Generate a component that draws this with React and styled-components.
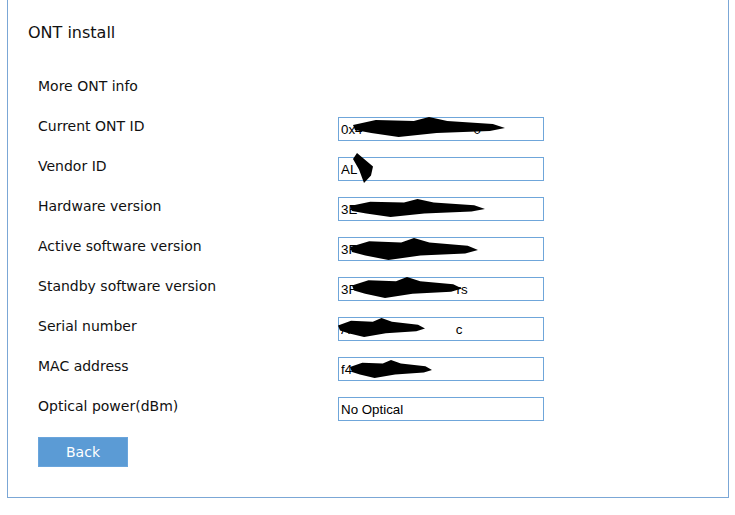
import React from 'react';
import styled, { createGlobalStyle } from 'styled-components';

const GlobalStyle = createGlobalStyle`
  html, body {
    margin: 0;
    padding: 0;
    background: #ffffff;
  }
  body {
    font-family: "DejaVu Sans", Verdana, sans-serif;
    color: #000;
  }
`;

const Panel = styled.div`
  margin-left: 7px;
  width: 722px;
  height: 498px;
  border: 1px solid #7ba7d6;
  border-top: none;
  box-sizing: border-box;
  padding: 21px 0 0 20px;
`;

const Title = styled.h1`
  margin: 0;
  font-size: 16px;
  font-weight: normal;
  line-height: 24px;
  color: #111;
`;

const Form = styled.div`
  padding: 24px 0 0 10px;
  display: flex;
  flex-direction: column;
`;

const Row = styled.div`
  display: grid;
  grid-template-columns: 300px 206px;
  align-items: center;
  height: 40px;
`;

const Label = styled.span`
  font-size: 14px;
  color: #111;
  padding-bottom: 6px;
`;

const Field = styled.div`
  position: relative;
  height: 24px;
`;

const Input = styled.input`
  width: 206px;
  height: 24px;
  box-sizing: border-box;
  border: 1px solid #6fa6da;
  padding: 1px 2px 0;
  font-family: "Liberation Sans", Arial, sans-serif;
  font-size: 13.33px;
  color: #000;
  background: #fff;
  outline: none;
`;

const Blot = styled.svg`
  position: absolute;
  left: 0;
  top: 0;
  overflow: visible;
  pointer-events: none;
`;

const BackButton = styled.button`
  margin-top: 8px;
  width: 90px;
  height: 30px;
  border: 1px solid #6aa5dc;
  background: #5b9bd5;
  color: #fff;
  font-family: "DejaVu Sans", Verdana, sans-serif;
  font-size: 14px;
  cursor: pointer;
`;

// black marker strokes that hide the private values
function Scribble({ x, y, w, h, tall }) {
  const m = y + h / 2;
  const d = tall
    ? `M${x + 4} ${y} L${x + w} ${y + h * 0.45} L${x + w - 2} ${y + h * 0.75} L${x + w * 0.55} ${y + h} L${x + w * 0.3} ${y + h * 0.55} L${x} ${y + h * 0.2} Z`
    : `M${x} ${m - 2} L${x + w * 0.15} ${m - h * 0.35} L${x + w * 0.4} ${m - h * 0.3} L${x + w * 0.5} ${y} L${x + w * 0.62} ${m - h * 0.3} L${x + w * 0.92} ${m - h * 0.15} L${x + w} ${m + 1} L${x + w * 0.9} ${m + h * 0.2} L${x + w * 0.55} ${m + h * 0.3} L${x + w * 0.3} ${y + h} L${x + w * 0.12} ${m + h * 0.3} L${x + 2} ${m + 3} Z`;
  return (
    <Blot width="206" height="24">
      <path d={d} fill="#000" />
    </Blot>
  );
}

const rows = [
  { label: 'Current ONT ID', value: '0x4                              0', blot: { x: 15, y: 0, w: 152, h: 20 } },
  { label: 'Vendor ID', value: 'AL', blot: { x: 15, y: -4, w: 20, h: 30, tall: true } },
  { label: 'Hardware version', value: '3E', blot: { x: 12, y: 2, w: 135, h: 18 } },
  { label: 'Active software version', value: '3F', blot: { x: 12, y: 1, w: 128, h: 22 } },
  { label: 'Standby software version', value: '3F                           rs', blot: { x: 14, y: 0, w: 110, h: 21 } },
  { label: 'Serial number', value: 'ALC                        c', blot: { x: 0, y: 1, w: 87, h: 19 } },
  { label: 'MAC address', value: 'f4', blot: { x: 12, y: 3, w: 82, h: 18 } },
  { label: 'Optical power(dBm)', value: 'No Optical' },
];

export default function App() {
  return (
    <>
      <GlobalStyle />
      <Panel>
        <Title>ONT install</Title>
        <Form>
          <Row>
            <Label>More ONT info</Label>
          </Row>
          {rows.map((r) => (
            <Row key={r.label}>
              <Label>{r.label}</Label>
              <Field>
                <Input readOnly value={r.value} />
                {r.blot && <Scribble {...r.blot} />}
              </Field>
            </Row>
          ))}
          <div>
            <BackButton type="button">Back</BackButton>
          </div>
        </Form>
      </Panel>
    </>
  );
}
